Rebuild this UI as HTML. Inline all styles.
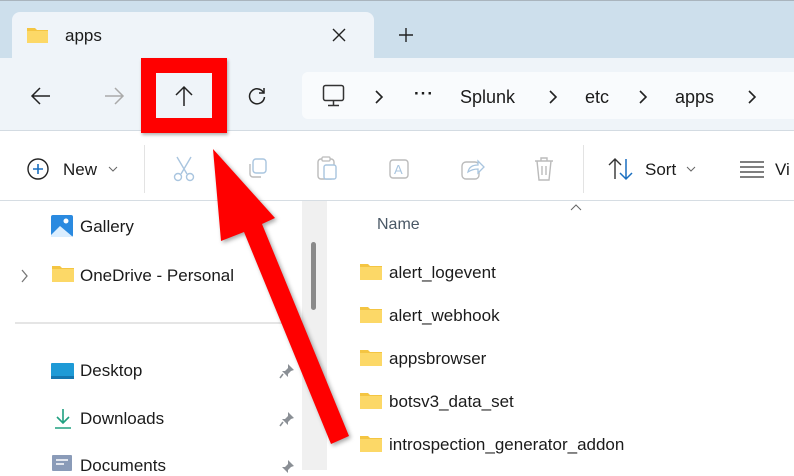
<!DOCTYPE html>
<html><head><style>
*{margin:0;padding:0;box-sizing:border-box}
body{width:794px;height:470px;overflow:hidden;background:#fff;font-family:"Segoe UI","Liberation Sans",sans-serif;color:#1b1b1b;position:relative}
.a{position:absolute}
.t{position:absolute;font-size:17px;white-space:nowrap;line-height:20px}
.fold{position:absolute;width:22px;height:16px}
</style></head><body>
<div class="a" style="left:0;top:0;width:794px;height:58px;background:#cddfec;border-top:1px solid #a9b4bd"></div>
<div class="a" style="left:12px;top:12px;width:362px;height:48px;background:#eff4f9;border-radius:8px 8px 0 0"></div>
<div class="a" style="left:0;top:58px;width:794px;height:73px;background:#eff4f9;border-bottom:1px solid #d3dbe2"></div>
<div class="a" style="left:302px;top:72px;width:492px;height:47px;background:#f9fbfd;border-radius:6px 0 0 6px"></div>
<svg class="a" style="left:26px;top:25px" width="24" height="20"><path d="M1 3h8l2 2h11v13H1z" fill="#f4c542"/><rect x="1" y="6" width="21" height="12" fill="#fcd867"/></svg>
<div class="t" style="left:65px;top:26px">apps</div>
<svg class="a" style="left:331px;top:27px" width="16" height="16"><path d="M2 2L14 14M14 2L2 14" stroke="#222" stroke-width="1.4"/></svg>
<svg class="a" style="left:398px;top:27px" width="16" height="16"><path d="M8 1V15M1 8H15" stroke="#222" stroke-width="1.4"/></svg>
<svg class="a" style="left:30px;top:86px" width="22" height="20"><path d="M20 10H2M10 2L2 10L10 18" stroke="#222" stroke-width="1.5" fill="none"/></svg>
<svg class="a" style="left:103px;top:86px" width="22" height="20"><path d="M2 10H20M12 2L20 10L12 18" stroke="#aaa" stroke-width="1.5" fill="none"/></svg>
<svg class="a" style="left:174px;top:85px" width="20" height="22"><path d="M10 21V2M2 10L10 2L18 10" stroke="#222" stroke-width="1.5" fill="none"/></svg>
<svg class="a" style="left:247px;top:86px" width="20" height="20"><path d="M16.5 6.5A7.5 7.5 0 1 0 17.5 11" stroke="#222" stroke-width="1.5" fill="none"/><path d="M17 2V7H12" stroke="#222" stroke-width="1.5" fill="none"/></svg>
<svg class="a" style="left:322px;top:84px" width="24" height="24"><rect x="1.5" y="1.5" width="20" height="15" rx="2" stroke="#333" stroke-width="1.5" fill="none"/><path d="M11.5 17v4M6 21.5h11" stroke="#333" stroke-width="1.5"/></svg>
<svg class="a" style="left:374px;top:90px" width="10" height="14"><path d="M2 1l6 6-6 6" stroke="#222" stroke-width="1.6" fill="none"/></svg>
<div class="t" style="left:414px;top:84px;font-weight:bold;letter-spacing:1px">···</div>
<div class="t" style="left:460px;top:87px;font-size:18px">Splunk</div>
<svg class="a" style="left:548px;top:90px" width="10" height="14"><path d="M2 1l6 6-6 6" stroke="#222" stroke-width="1.6" fill="none"/></svg>
<div class="t" style="left:585px;top:87px;font-size:18px">etc</div>
<svg class="a" style="left:638px;top:90px" width="10" height="14"><path d="M2 1l6 6-6 6" stroke="#222" stroke-width="1.6" fill="none"/></svg>
<div class="t" style="left:675px;top:87px;font-size:18px">apps</div>
<svg class="a" style="left:747px;top:90px" width="10" height="14"><path d="M2 1l6 6-6 6" stroke="#222" stroke-width="1.6" fill="none"/></svg>
<div class="a" style="left:0;top:200px;width:794px;height:1px;background:#d6dde3"></div>
<svg class="a" style="left:26px;top:157px" width="24" height="24"><circle cx="12" cy="12" r="10" stroke="#222" stroke-width="1.4" fill="none"/><path d="M12 7v10M7 12h10" stroke="#1a6fc0" stroke-width="1.6"/></svg>
<div class="t" style="left:63px;top:160px">New</div>
<svg class="a" style="left:108px;top:166px" width="10" height="6"><path d="M1 1l4 4 4-4" stroke="#666" stroke-width="1" fill="none"/></svg>
<div class="a" style="left:144px;top:145px;width:1px;height:48px;background:#e3e3e3"></div>
<svg class="a" style="left:172px;top:156px" width="24" height="26"><path d="M5 1L15 18M19 1L9 18" stroke="#a9c5df" stroke-width="1.4"/><circle cx="6" cy="21" r="3.5" stroke="#a9c5df" stroke-width="1.4" fill="none"/><circle cx="18" cy="21" r="3.5" stroke="#a9c5df" stroke-width="1.4" fill="none"/></svg>
<svg class="a" style="left:245px;top:157px" width="24" height="24"><rect x="8" y="2" width="13" height="14" rx="3" stroke="#a9c5df" stroke-width="1.4" fill="none"/><path d="M5 7v10a3 3 0 0 0 3 3h8" stroke="#bbb" stroke-width="1.4" fill="none"/></svg>
<svg class="a" style="left:316px;top:155px" width="24" height="28"><rect x="2" y="4" width="16" height="20" rx="3" stroke="#bbb" stroke-width="1.4" fill="none"/><rect x="8" y="10" width="12" height="14" rx="2" stroke="#a9c5df" stroke-width="1.4" fill="#fff"/><rect x="6" y="2" width="8" height="4" rx="1" stroke="#bbb" stroke-width="1.2" fill="#fff"/></svg>
<svg class="a" style="left:388px;top:157px" width="24" height="24"><rect x="2" y="3" width="18" height="18" rx="3" stroke="#bbb" stroke-width="1.4" fill="none"/><text x="6" y="17" font-size="13" fill="#a9c5df" font-family="Liberation Sans">A</text></svg>
<svg class="a" style="left:460px;top:157px" width="26" height="24"><rect x="2" y="5" width="17" height="17" rx="4" stroke="#bbb" stroke-width="1.4" fill="none"/><path d="M8 15c1-5 5-7 10-7V4l6 6-6 6v-4c-4 0-7 1-10 3z" stroke="#a9c5df" stroke-width="1.3" fill="#fff"/></svg>
<svg class="a" style="left:532px;top:156px" width="24" height="26"><path d="M3 5h18M9 5V2h6v3M5 5l2 19h10l2-19M10 10v9M14 10v9" stroke="#bbb" stroke-width="1.4" fill="none"/></svg>
<div class="a" style="left:583px;top:145px;width:1px;height:48px;background:#e3e3e3"></div>
<svg class="a" style="left:608px;top:157px" width="26" height="24"><path d="M7 22V2M1 8l6-6 6 6" stroke="#333" stroke-width="1.4" fill="none"/><path d="M18 2v20M12 16l6 6 6-6" stroke="#1a6fc0" stroke-width="1.5" fill="none"/></svg>
<div class="t" style="left:645px;top:160px">Sort</div>
<svg class="a" style="left:686px;top:166px" width="10" height="6"><path d="M1 1l4 4 4-4" stroke="#666" stroke-width="1" fill="none"/></svg>
<svg class="a" style="left:739px;top:160px" width="26" height="18"><path d="M1 2h24M1 7h24M1 12h24M1 17h24" stroke="#333" stroke-width="1.3"/></svg>
<div class="t" style="left:775px;top:160px">Vi</div>
<div class="a" style="left:302px;top:201px;width:25px;height:269px;background:#f0f0f0"></div>
<div class="a" style="left:311px;top:242px;width:5px;height:68px;background:#8a8a8a;border-radius:3px"></div>
<svg class="a" style="left:51px;top:215px" width="24" height="24"><rect x="0" y="0" width="22" height="22" rx="2" fill="#2a8ae0"/><circle cx="15" cy="6" r="2.5" fill="#fff"/><path d="M0 20L9 11 22 22H0z" fill="#dbeeff"/></svg>
<div class="t" style="left:80px;top:217px">Gallery</div>
<svg class="a" style="left:21px;top:269px" width="8" height="14"><path d="M1 1l5 6-5 6" stroke="#777" stroke-width="1.3" fill="none"/></svg>
<svg class="a fold" style="left:52px;top:266px" width="22" height="16"><path d="M0 0h8l2 2h12v14H0z" fill="#f4c542"/><rect x="0" y="3" width="22" height="13" fill="#fcd867"/></svg>
<div class="t" style="left:80px;top:266px">OneDrive - Personal</div>
<div class="a" style="left:15px;top:322px;width:275px;height:2px;background:#e5e5e5"></div>
<svg class="a" style="left:51px;top:362px" width="24" height="20"><rect x="0" y="1" width="23" height="16" rx="1" fill="#1e9ad6"/><rect x="0" y="14" width="23" height="3" fill="#1476b0"/></svg>
<div class="t" style="left:80px;top:361px">Desktop</div>
<svg class="a" style="left:53px;top:407px" width="20" height="24"><path d="M10 2v14M4 10l6 6 6-6M2 21h16" stroke="#20a080" stroke-width="1.6" fill="none"/></svg>
<div class="t" style="left:80px;top:409px">Downloads</div>
<svg class="a" style="left:52px;top:455px" width="22" height="16"><rect x="0" y="0" width="20" height="16" rx="1" fill="#8a9bb8"/><path d="M4 5h12M4 9h8" stroke="#fff" stroke-width="1.4"/></svg>
<div class="t" style="left:80px;top:456px">Documents</div>
<svg class="a" style="left:279px;top:363px" width="16" height="16"><path d="M9 1l6 6-3 1-3 3 0 3-6-6 3 0 3-3z" fill="#8a8f95"/><path d="M4 11L1 15" stroke="#8a8f95" stroke-width="1.6"/></svg>
<svg class="a" style="left:279px;top:411px" width="16" height="16"><path d="M9 1l6 6-3 1-3 3 0 3-6-6 3 0 3-3z" fill="#8a8f95"/><path d="M4 11L1 15" stroke="#8a8f95" stroke-width="1.6"/></svg>
<svg class="a" style="left:279px;top:459px" width="16" height="16"><path d="M9 1l6 6-3 1-3 3 0 3-6-6 3 0 3-3z" fill="#8a8f95"/></svg>
<svg class="a" style="left:570px;top:204px" width="12" height="8"><path d="M1 6l5-5 5 5" stroke="#666" stroke-width="1" fill="none"/></svg>
<div class="t" style="left:377px;top:215px;color:#4a5866;font-size:16px">Name</div>
<svg class="a" style="left:360px;top:264px" width="22" height="16"><path d="M0 0h8l2 2h12v14H0z" fill="#f4c542"/><rect x="0" y="3" width="22" height="13" fill="#fcd867"/></svg>
<div class="t" style="left:389px;top:263px">alert_logevent</div>
<svg class="a" style="left:360px;top:307px" width="22" height="16"><path d="M0 0h8l2 2h12v14H0z" fill="#f4c542"/><rect x="0" y="3" width="22" height="13" fill="#fcd867"/></svg>
<div class="t" style="left:389px;top:306px">alert_webhook</div>
<svg class="a" style="left:360px;top:350px" width="22" height="16"><path d="M0 0h8l2 2h12v14H0z" fill="#f4c542"/><rect x="0" y="3" width="22" height="13" fill="#fcd867"/></svg>
<div class="t" style="left:389px;top:349px">appsbrowser</div>
<svg class="a" style="left:360px;top:393px" width="22" height="16"><path d="M0 0h8l2 2h12v14H0z" fill="#f4c542"/><rect x="0" y="3" width="22" height="13" fill="#fcd867"/></svg>
<div class="t" style="left:389px;top:392px">botsv3_data_set</div>
<svg class="a" style="left:360px;top:436px" width="22" height="16"><path d="M0 0h8l2 2h12v14H0z" fill="#f4c542"/><rect x="0" y="3" width="22" height="13" fill="#fcd867"/></svg>
<div class="t" style="left:389px;top:435px">introspection_generator_addon</div>
<div class="a" style="left:141px;top:58px;width:86px;height:75px;border:15px solid #ff0000;box-shadow:1px 2px 3px rgba(0,0,0,.3)"></div>
<svg class="a" style="left:0;top:0" width="794" height="470"><polygon points="213,149 275,218 262,224 349,436 331,444 244,232 221,241" fill="#ff0000" style="filter:drop-shadow(2px 2px 2px rgba(0,0,0,.35))"/></svg>
</body></html>
